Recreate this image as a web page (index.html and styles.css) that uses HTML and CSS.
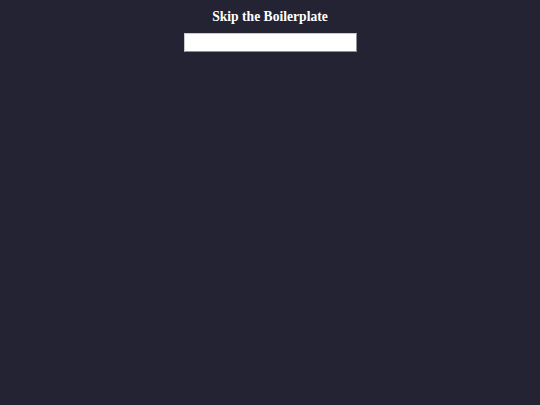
FILE: index.html
```html
<!DOCTYPE html>
<html lang="en">

<head>
  <meta charset="UTF-8" />
  <meta name="viewport" content="width=device-width, initial-scale=1.0" />
  <title>Skip the Boilerplate</title>
  <link rel="stylesheet" href="styles.css">
</head>

<body>
  <div class="app">
    <h1>Skip the Boilerplate</h1>
    <input type="text" class="search" />
  </div>
</body>

</html>
```

FILE: styles.css
```css
body {
  margin: 0;
  background-color: #242334;
  min-height: 100vh;
  font-family: "Liberation Serif", serif;
}

.app {
  display: flex;
  flex-direction: column;
  align-items: center;
  padding-top: 8px;
}

h1 {
  margin: 0 0 8px;
  font-size: 13.6px;
  line-height: 17px;
  color: #ffffff;
}

.search {
  width: 173px;
  height: 19px;
  padding: 0;
  box-sizing: border-box;
  background-color: #ffffff;
  border: 1px solid #c8c8d0;
  border-right-color: #8e8e98;
  border-bottom-color: #8e8e98;
}
```
